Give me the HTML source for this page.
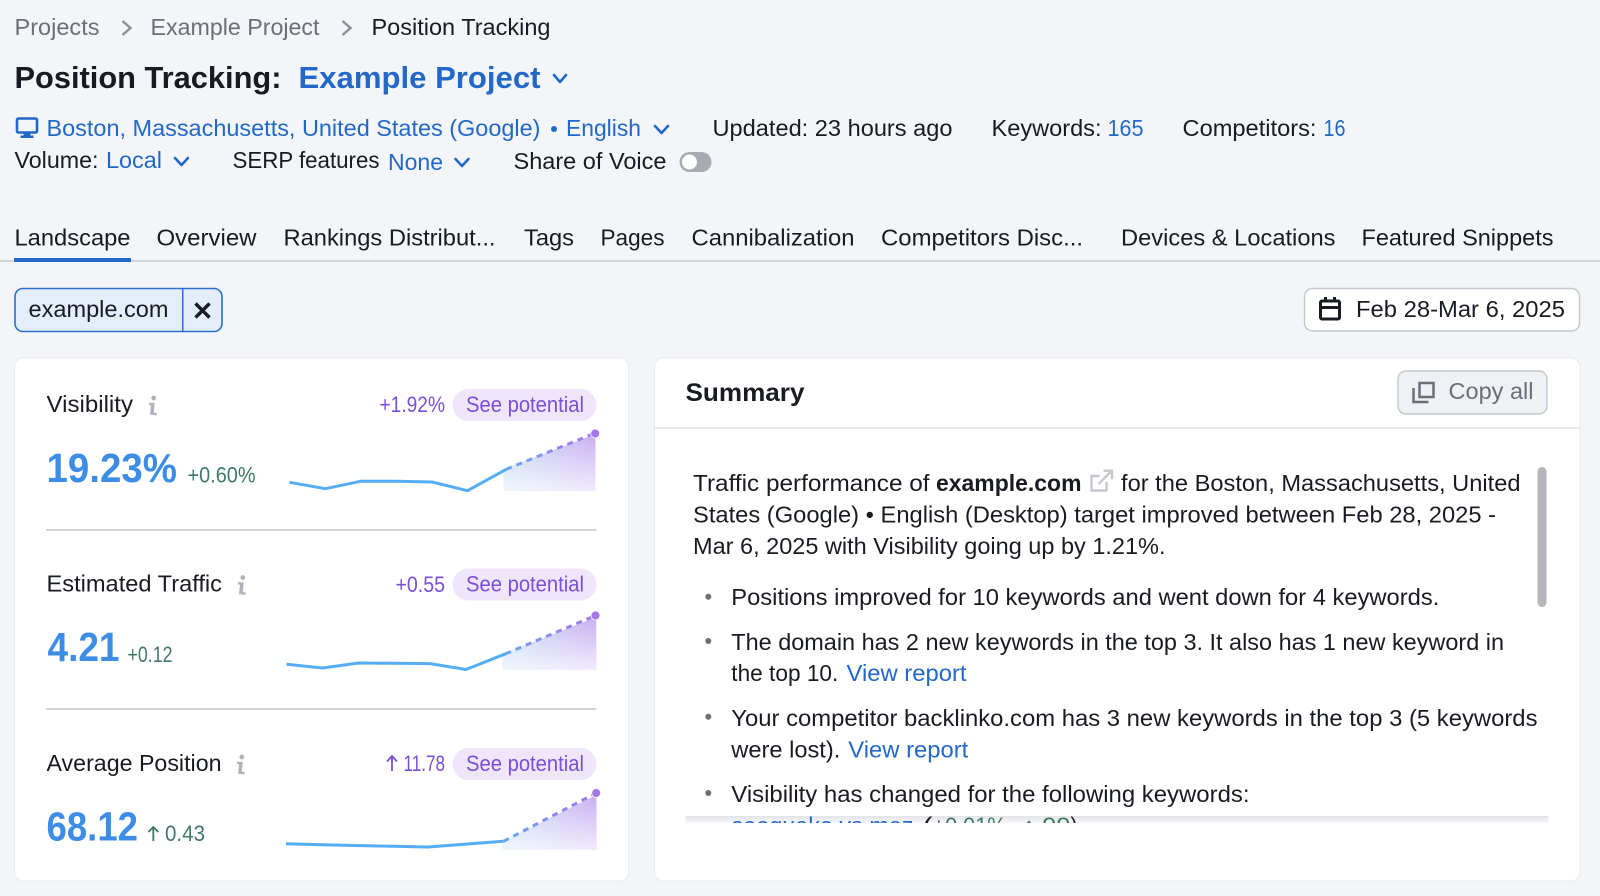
<!DOCTYPE html>
<html lang="en">
<head>
<meta charset="utf-8">
<title>Position Tracking</title>
<style>
html,body{margin:0;padding:0;width:1600px;height:896px;overflow:hidden;background:#f4f5f9}
svg{display:block;filter:blur(.35px)}
text{font-family:"Liberation Sans",Arial,sans-serif;font-size:23px;fill:#191b23}
.g{fill:#6c6e79}
.b{fill:#2268c8}
.t{font-size:31px;font-weight:700}
.s{font-size:22px}
.p{fill:#7a4fd8}
.gr{fill:#3f7a62}
.m{font-size:41px;font-weight:700;fill:#3d8ce6}
.ch{fill:none;stroke:#2268c8;stroke-width:2.6;stroke-linecap:round;stroke-linejoin:round}
.sp{fill:none;stroke:#55aef5;stroke-width:3;stroke-linejoin:round}
.da{fill:none;stroke-width:3;stroke-dasharray:6 5}
</style>
</head>
<body>
<svg width="1600" height="896" viewBox="0.5 0 1600 896" xmlns="http://www.w3.org/2000/svg">
<defs>
<linearGradient id="h" x1="0" y1="0" x2="1" y2="0"><stop offset="0" stop-color="#c4dcf6"/><stop offset="1" stop-color="#c9aef2"/></linearGradient>
<linearGradient id="v" x1="0" y1="0" x2="0" y2="1"><stop offset="0" stop-color="#fff" stop-opacity="0"/><stop offset="1" stop-color="#fff" stop-opacity=".75"/></linearGradient>
<linearGradient id="d" x1="0" y1="0" x2="1" y2="0"><stop offset="0" stop-color="#6aa6ee"/><stop offset="1" stop-color="#a677e6"/></linearGradient>
<linearGradient id="bar" x1="0" y1="0" x2="0" y2="1"><stop offset="0" stop-color="#e3e4e9"/><stop offset="1" stop-color="#f8f8fa"/></linearGradient>
<clipPath id="cl"><rect x="686" y="780" width="860" height="43"/></clipPath>
</defs>

<!-- breadcrumbs -->
<text x="15" y="35" class="g" textLength="85" lengthAdjust="spacingAndGlyphs">Projects</text>
<path d="M123 21l8 7-8 7" fill="none" stroke="#8e9099" stroke-width="2.4"/>
<text x="151" y="35" class="g" textLength="169" lengthAdjust="spacingAndGlyphs">Example Project</text>
<path d="M343 21l8 7-8 7" fill="none" stroke="#8e9099" stroke-width="2.4"/>
<text x="372" y="35" textLength="179" lengthAdjust="spacingAndGlyphs">Position Tracking</text>

<!-- title -->
<text x="15" y="88" class="t" textLength="267" lengthAdjust="spacingAndGlyphs">Position Tracking:</text>
<text x="299" y="88" class="t b" textLength="242" lengthAdjust="spacingAndGlyphs">Example Project</text>
<path class="ch" d="M554.500 75l6 7 6-7"/>

<!-- meta row -->
<g fill="none" stroke="#2268c8" stroke-width="2.600"><rect x="17.500" y="118.500" width="20" height="14" rx="1.500"/></g>
<rect x="24" y="133" width="7" height="3" fill="#2268c8"/><rect x="21" y="135.500" width="13" height="2.500" fill="#2268c8"/>
<text x="47" y="136" class="b" textLength="494" lengthAdjust="spacingAndGlyphs">Boston, Massachusetts, United States (Google)</text>
<circle cx="554.500" cy="129" r="3" fill="#2268c8"/>
<text x="566.500" y="136" class="b" textLength="75" lengthAdjust="spacingAndGlyphs">English</text>
<path class="ch" d="M655.500 126l6.500 7 6.500-7"/>
<text x="713" y="136" textLength="240" lengthAdjust="spacingAndGlyphs">Updated: 23 hours ago</text>
<text x="992" y="136" textLength="110" lengthAdjust="spacingAndGlyphs">Keywords:</text>
<text x="1108" y="136" class="b" textLength="36" lengthAdjust="spacingAndGlyphs">165</text>
<text x="1183" y="136" textLength="134" lengthAdjust="spacingAndGlyphs">Competitors:</text>
<text x="1324" y="136" class="b" textLength="22" lengthAdjust="spacingAndGlyphs">16</text>

<text x="15" y="168" textLength="84" lengthAdjust="spacingAndGlyphs">Volume:</text>
<text x="106.500" y="168" class="b" textLength="56" lengthAdjust="spacingAndGlyphs">Local</text>
<path class="ch" d="M175.500 158l6.500 7 6.500-7"/>
<text x="233" y="168" textLength="147" lengthAdjust="spacingAndGlyphs">SERP features</text>
<text x="388.500" y="170" class="b" textLength="55" lengthAdjust="spacingAndGlyphs">None</text>
<path class="ch" d="M456 159l6.500 7 6.500-7"/>
<text x="514" y="169" textLength="153" lengthAdjust="spacingAndGlyphs">Share of Voice</text>
<rect x="680" y="152" width="32" height="20" rx="10" fill="#a8abb3"/>
<circle cx="690" cy="162" r="7.500" fill="#fff"/>

<!-- tabs -->
<rect x="0" y="260" width="1601" height="2" fill="#d1d4db"/>
<rect x="14.500" y="258" width="117" height="4" fill="#2268c8"/>
<text x="15" y="245.500" textLength="116" lengthAdjust="spacingAndGlyphs">Landscape</text>
<text x="157" y="245.500" textLength="100" lengthAdjust="spacingAndGlyphs">Overview</text>
<text x="284" y="245.500" textLength="212" lengthAdjust="spacingAndGlyphs">Rankings Distribut...</text>
<text x="524.500" y="245.500" textLength="50" lengthAdjust="spacingAndGlyphs">Tags</text>
<text x="601" y="245.500" textLength="64" lengthAdjust="spacingAndGlyphs">Pages</text>
<text x="692" y="245.500" textLength="163" lengthAdjust="spacingAndGlyphs">Cannibalization</text>
<text x="881.500" y="245.500" textLength="202" lengthAdjust="spacingAndGlyphs">Competitors Disc...</text>
<text x="1121.500" y="245.500" textLength="214.500" lengthAdjust="spacingAndGlyphs">Devices &amp; Locations</text>
<text x="1362" y="245.500" textLength="192" lengthAdjust="spacingAndGlyphs">Featured Snippets</text>

<!-- chip -->
<rect x="15.500" y="288.500" width="207" height="43" rx="8" fill="#e4eefb" stroke="#2a6fcf" stroke-width="1.600"/>
<rect x="182.500" y="289" width="1.500" height="42" fill="#2a6fcf"/>
<text x="29" y="317" textLength="140" lengthAdjust="spacingAndGlyphs">example.com</text>
<path d="M196 303.500l14 14m0-14l-14 14" stroke="#191b23" stroke-width="3.400" fill="none"/>

<!-- date -->
<rect x="1305" y="288.500" width="275" height="42.500" rx="8" fill="#fff" stroke="#c4c7cf" stroke-width="1.400"/>
<g fill="none" stroke="#191b23" stroke-width="3"><rect x="1321" y="301" width="19" height="18" rx="1.500"/><path d="M1321 307.500h19M1326 297v5M1335 297v5"/></g>
<text x="1356.500" y="317" textLength="209" lengthAdjust="spacingAndGlyphs">Feb 28-Mar 6, 2025</text>

<!-- left card -->
<rect x="15" y="358" width="614" height="523" rx="9" fill="#fff" stroke="#e9ebf0" stroke-width="1"/>

<!-- Visibility -->
<text x="47" y="412" textLength="86.500" lengthAdjust="spacingAndGlyphs">Visibility</text>
<g fill="#b0b3bb" transform="rotate(6 154 405)"><circle cx="153.500" cy="398" r="2.400"/><path d="M149.500 403h5.500v9.500h3v2.500h-6.500v-9.500h-2z"/></g>
<text x="380" y="412" class="s p" textLength="65.500" lengthAdjust="spacingAndGlyphs">+1.92%</text>
<rect x="453" y="389" width="144" height="32" rx="16" fill="#f0e6fb"/>
<text x="466.500" y="412" class="s p" textLength="118" lengthAdjust="spacingAndGlyphs">See potential</text>
<text x="47" y="482" class="m" textLength="130.500" lengthAdjust="spacingAndGlyphs">19.23%</text>
<text x="188" y="482.500" class="s gr" textLength="68" lengthAdjust="spacingAndGlyphs">+0.60%</text>
<path d="M504 469.300L596 434V490.700H504z" fill="url(#h)"/><path d="M504 469.300L596 434V490.700H504z" fill="url(#v)"/>
<polyline class="sp" points="290,482.300 325.700,488.700 361,481.300 396.700,481.300 432.700,482 468,490.700 506.700,469.300"/>
<path class="da" stroke="url(#d)" d="M506.700 469.300L595.700 433"/>
<circle cx="595.700" cy="433.500" r="4.500" fill="#a677e6" stroke="#fff" stroke-width=".8"/>
<rect x="46.500" y="529" width="550.500" height="2" fill="#d1d4db"/>

<!-- Estimated Traffic -->
<text x="47" y="591.500" textLength="175.500" lengthAdjust="spacingAndGlyphs">Estimated Traffic</text>
<g fill="#b0b3bb" transform="rotate(6 243 585)"><circle cx="242.500" cy="577.500" r="2.400"/><path d="M238.500 582.500h5.500v9.500h3v2.500h-6.500V585h-2z"/></g>
<text x="396" y="592" class="s p" textLength="49.500" lengthAdjust="spacingAndGlyphs">+0.55</text>
<rect x="453" y="568.500" width="144" height="32" rx="16" fill="#f0e6fb"/>
<text x="466.500" y="591.500" class="s p" textLength="118" lengthAdjust="spacingAndGlyphs">See potential</text>
<text x="48" y="661" class="m" textLength="72" lengthAdjust="spacingAndGlyphs">4.21</text>
<text x="128" y="662" class="s gr" textLength="45" lengthAdjust="spacingAndGlyphs">+0.12</text>
<path d="M503 654L596.700 617V670H503z" fill="url(#h)"/><path d="M503 654L596.700 617V670H503z" fill="url(#v)"/>
<polyline class="sp" points="287,664.300 323,668 359,663 430.600,663.600 466.500,669.500 506,653.800"/>
<path class="da" stroke="url(#d)" d="M506 653.800L596 615.500"/>
<circle cx="596" cy="615.500" r="4.500" fill="#a677e6" stroke="#fff" stroke-width=".8"/>
<rect x="46.500" y="708" width="550.500" height="2" fill="#d1d4db"/>

<!-- Average Position -->
<text x="47" y="771" textLength="175" lengthAdjust="spacingAndGlyphs">Average Position</text>
<g fill="#b0b3bb" transform="rotate(6 242 765)"><circle cx="241.500" cy="757" r="2.400"/><path d="M237.500 762h5.500v9.500h3v2.500h-6.500v-9.500h-2z"/></g>
<path d="M392.500 771v-15m-5 5.500l5-5.500 5 5.500" fill="none" stroke="#7a4fd8" stroke-width="1.800"/>
<text x="404" y="771" class="s p" textLength="41.500" lengthAdjust="spacingAndGlyphs">11.78</text>
<rect x="453" y="748" width="144" height="32" rx="16" fill="#f0e6fb"/>
<text x="466.500" y="771" class="s p" textLength="118" lengthAdjust="spacingAndGlyphs">See potential</text>
<text x="47" y="840.500" class="m" textLength="91.500" lengthAdjust="spacingAndGlyphs">68.12</text>
<path d="M153.800 841v-14m-5 5l5-5 5 5" fill="none" stroke="#3f7a62" stroke-width="1.800"/>
<text x="165.500" y="841" class="s gr" textLength="40" lengthAdjust="spacingAndGlyphs">0.43</text>
<path d="M503 841.500L597 795V850H503z" fill="url(#h)"/><path d="M503 841.500L597 795V850H503z" fill="url(#v)"/>
<polyline class="sp" points="286.500,843.700 322,844.800 428.600,847 504,841.300"/>
<path class="da" stroke="url(#d)" d="M504 841.300L596.700 793"/>
<circle cx="596.700" cy="793" r="4.500" fill="#a677e6" stroke="#fff" stroke-width=".8"/>

<!-- right card -->
<rect x="655" y="358" width="925.500" height="523" rx="9" fill="#fff" stroke="#e9ebf0" stroke-width="1"/>
<text x="686" y="401" style="font-size:25px;font-weight:700" textLength="119" lengthAdjust="spacingAndGlyphs">Summary</text>
<rect x="655" y="427" width="925.500" height="2" fill="#e5e7ec"/>
<rect x="1398.500" y="371" width="149" height="43" rx="8" fill="#f0f1f4" stroke="#c4c7cf" stroke-width="1.400"/>
<g fill="none" stroke="#6c6e79" stroke-width="2.500"><rect x="1420" y="383" width="14" height="14"/><path d="M1414 388v14h15"/></g>
<text x="1449" y="399" class="g" textLength="85" lengthAdjust="spacingAndGlyphs">Copy all</text>

<!-- body -->
<text x="693.500" y="491" textLength="236.500" lengthAdjust="spacingAndGlyphs">Traffic performance of</text>
<text x="936.500" y="491" style="font-weight:700" textLength="145.500" lengthAdjust="spacingAndGlyphs">example.com</text>
<g fill="none" stroke="#c4c7cf" stroke-width="2.400"><path d="M1100 476h-8v14.500h15v-8.500"/><path d="M1099 484l12.500-12.500m-7.500-.8h8.500v8.500"/></g>
<text x="1121.500" y="491" textLength="399.500" lengthAdjust="spacingAndGlyphs">for the Boston, Massachusetts, United</text>
<text x="693.500" y="522.500" textLength="803" lengthAdjust="spacingAndGlyphs">States (Google) • English (Desktop) target improved between Feb 28, 2025 -</text>
<text x="693.500" y="554" textLength="472.500" lengthAdjust="spacingAndGlyphs">Mar 6, 2025 with Visibility going up by 1.21%.</text>

<circle cx="708.800" cy="596.700" r="3" fill="#6c6e79"/>
<text x="731.800" y="605" textLength="708" lengthAdjust="spacingAndGlyphs">Positions improved for 10 keywords and went down for 4 keywords.</text>
<circle cx="708.800" cy="641" r="3" fill="#6c6e79"/>
<text x="731.800" y="650" textLength="772.700" lengthAdjust="spacingAndGlyphs">The domain has 2 new keywords in the top 3. It also has 1 new keyword in</text>
<text x="731.800" y="681" textLength="107" lengthAdjust="spacingAndGlyphs">the top 10.</text>
<text x="847" y="681" class="b" textLength="120" lengthAdjust="spacingAndGlyphs">View report</text>
<circle cx="708.800" cy="716.700" r="3" fill="#6c6e79"/>
<text x="731.800" y="726" textLength="806.200" lengthAdjust="spacingAndGlyphs">Your competitor backlinko.com has 3 new keywords in the top 3 (5 keywords</text>
<text x="731.800" y="757.500" textLength="109" lengthAdjust="spacingAndGlyphs">were lost).</text>
<text x="848.800" y="757.500" class="b" textLength="120" lengthAdjust="spacingAndGlyphs">View report</text>
<circle cx="708.800" cy="793" r="3" fill="#6c6e79"/>
<text x="731.800" y="802" textLength="518.200" lengthAdjust="spacingAndGlyphs">Visibility has changed for the following keywords:</text>
<rect x="686" y="816" width="863" height="7" fill="url(#bar)"/>
<g clip-path="url(#cl)">
<text x="732" y="833.500" class="b" textLength="182" lengthAdjust="spacingAndGlyphs">seoquake vs moz</text>
<text x="923" y="833.500" textLength="10" lengthAdjust="spacingAndGlyphs">(</text>
<text x="933" y="833.500" class="gr" textLength="80" lengthAdjust="spacingAndGlyphs">+0.01%,</text>
<text x="1023" y="833.500" class="gr" textLength="48" lengthAdjust="spacingAndGlyphs">↑ 99</text>
<text x="1071" y="833.500" textLength="7" lengthAdjust="spacingAndGlyphs">)</text>
</g>
<rect x="1538" y="467" width="9" height="140" rx="4.500" fill="#b5b7bd"/>
</svg>
</body>
</html>
